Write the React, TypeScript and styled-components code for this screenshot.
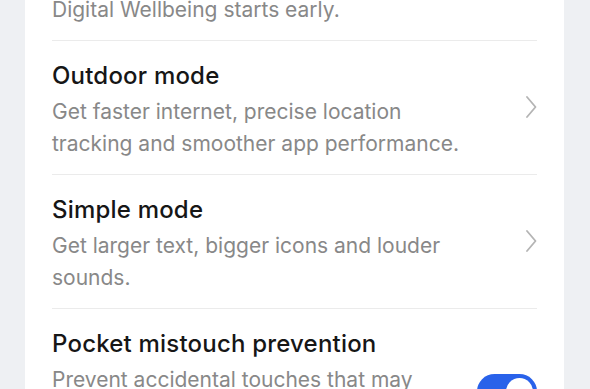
import React from "react";
import styled, { createGlobalStyle } from "styled-components";

const GlobalStyle = createGlobalStyle`
  html, body {
    margin: 0;
    padding: 0;
    background: #eef0f3;
    overflow: hidden;
  }
  body {
    font-family: Inter, "Noto Sans", "Liberation Sans", sans-serif;
    -webkit-font-smoothing: antialiased;
  }
`;

const Screen = styled.div`
  width: 590px;
  height: 389px;
  overflow: hidden;
  background: #eef0f3;
  display: flex;
  padding-left: 25px;
  box-sizing: border-box;
`;

const Card = styled.div`
  width: 539px;
  background: #ffffff;
  padding: 0 27px;
  box-sizing: border-box;
  display: flex;
  flex-direction: column;
  margin-top: -6px;
`;

const Tail = styled.div`
  padding-bottom: 13.5px;
`;

const Row = styled.div`
  display: flex;
  align-items: center;
  gap: 10px;
  border-top: 1px solid #ebebeb;
  padding: 13px 0 13.5px;
`;

const TextCol = styled.div`
  flex: 1;
  min-width: 0;
  display: flex;
  flex-direction: column;
  gap: 5px;
  padding-top: 6.5px;
`;

const Title = styled.div`
  font-size: 24px;
  line-height: 30px;
  letter-spacing: 0.2px;
  color: #161616;
  font-weight: 500;
`;

const Description = styled.div`
  font-size: 21px;
  line-height: 32.5px;
  color: #888888;
`;

const Accessory = styled.div`
  width: 60px;
  flex: none;
  display: flex;
  justify-content: flex-end;
  align-items: center;
`;

const Chevron = () => (
  <svg width="12" height="22" viewBox="0 0 12 22" fill="none">
    <path
      d="M2 1 L10.5 11 L2 21"
      stroke="#b4b4b4"
      strokeWidth="1.8"
      strokeLinecap="round"
      strokeLinejoin="round"
    />
  </svg>
);

const Switch = styled.div<{ $on: boolean }>`
  width: 60px;
  height: 35px;
  border-radius: 18px;
  background: ${(p) => (p.$on ? "#2962ea" : "#d6d6d6")};
  padding: 4px;
  box-sizing: border-box;
  display: flex;
  justify-content: ${(p) => (p.$on ? "flex-end" : "flex-start")};
`;

const Knob = styled.div`
  width: 27px;
  height: 27px;
  border-radius: 50%;
  background: #ffffff;
`;

type Item = {
  title: string;
  desc: string;
  kind: "chevron" | "switch";
};

const items: Item[] = [
  {
    title: "Outdoor mode",
    desc: "Get faster internet, precise location tracking and smoother app performance.",
    kind: "chevron",
  },
  {
    title: "Simple mode",
    desc: "Get larger text, bigger icons and louder sounds.",
    kind: "chevron",
  },
  {
    title: "Pocket mistouch prevention",
    desc: "Prevent accidental touches that may occur when your phone is in your pocket or bag.",
    kind: "switch",
  },
];

export default function App() {
  return (
    <>
      <GlobalStyle />
      <Screen>
        <Card>
          <Tail>
            <Description>Digital Wellbeing starts early.</Description>
          </Tail>
          {items.map((it) => (
            <Row key={it.title}>
              <TextCol>
                <Title>{it.title}</Title>
                <Description>{it.desc}</Description>
              </TextCol>
              <Accessory>
                {it.kind === "chevron" ? (
                  <Chevron />
                ) : (
                  <Switch $on>
                    <Knob />
                  </Switch>
                )}
              </Accessory>
            </Row>
          ))}
        </Card>
      </Screen>
    </>
  );
}
